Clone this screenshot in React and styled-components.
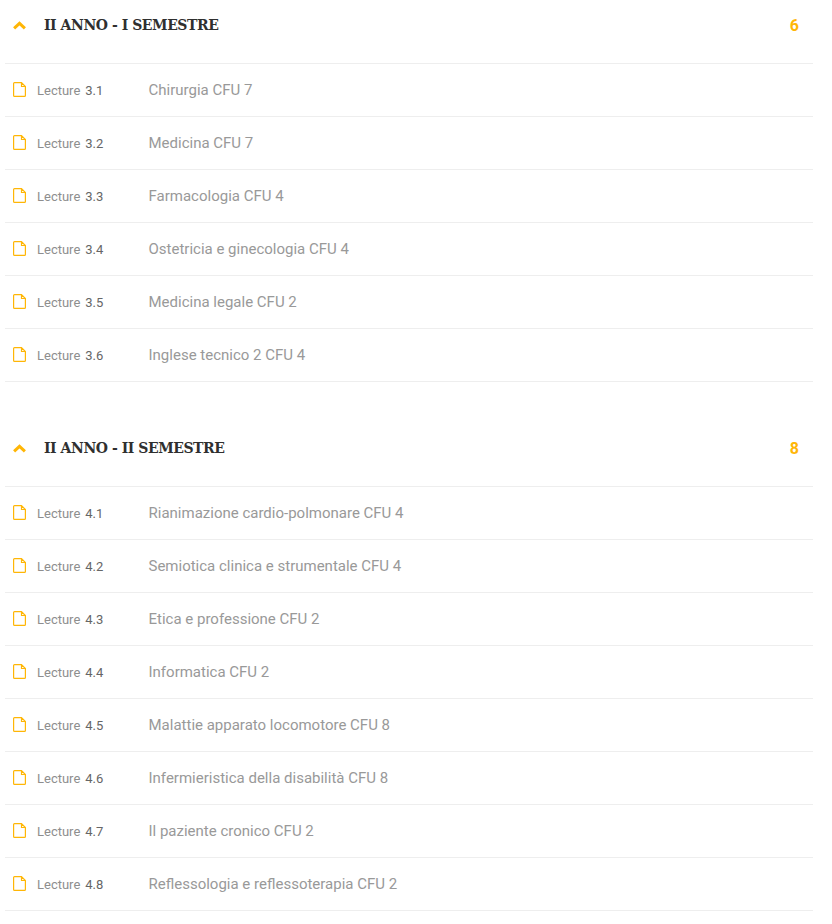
import React from "react"
import styled, { createGlobalStyle } from "styled-components"

const GlobalStyle = createGlobalStyle`
  html, body {
    margin: 0;
    padding: 0;
    background: #fff;
  }
`
const Curriculum = styled.div`
  padding: 0 19px 0 5px;
  font-family: Roboto, sans-serif;
`
const Section = styled.section`
  & + & {
    margin-top: 41px;
  }
`
const SectionHeader = styled.div`
  display: flex;
  align-items: center;
  height: 50px;
  padding: 0 14px 13px 8px;
  border-bottom: 1px solid #eeeeee;
`
const Chevron = styled.svg`
  width: 13px;
  height: 9px;
  margin-right: 18px;
  color: #ffb606;
`
const SectionTitle = styled.h3`
  flex: 1;
  margin: 0;
  color: #2f2f2f;
  font-family: "DejaVu Serif", serif;
  font-size: 14px;
  font-weight: 700;
  letter-spacing: -0.45px;
  line-height: 50px;
`
const SectionCount = styled.span`
  color: #ffb606;
  font-size: 16px;
  font-weight: 700;
`
const LessonRow = styled.div`
  display: flex;
  align-items: center;
  height: 51px;
  padding: 1px 0 0 8px;
  border-bottom: 1px solid #eeeeee;
`
const FileIcon = styled.svg`
  width: 13px;
  height: 15px;
  margin-right: 11px;
  margin-top: -2px;
  color: #ffb606;
`
const LessonLabel = styled.span`
  display: flex;
  gap: 5px;
  width: 111.5px;
  color: #8e8e8e;
  font-size: 13px;
`
const LessonNumber = styled.span`
  color: #666;
`
const LessonName = styled.span`
  margin-top: -2px;
  color: #999;
  font-size: 15px;
`

const sections = [
  {
    title: "II ANNO - I SEMESTRE",
    count: 6,
    lessons: [
      ["3.1", "Chirurgia CFU 7"],
      ["3.2", "Medicina CFU 7"],
      ["3.3", "Farmacologia CFU 4"],
      ["3.4", "Ostetricia e ginecologia CFU 4"],
      ["3.5", "Medicina legale CFU 2"],
      ["3.6", "Inglese tecnico 2 CFU 4"],
    ],
  },
  {
    title: "II ANNO - II SEMESTRE",
    count: 8,
    lessons: [
      ["4.1", "Rianimazione cardio-polmonare CFU 4"],
      ["4.2", "Semiotica clinica e strumentale CFU 4"],
      ["4.3", "Etica e professione CFU 2"],
      ["4.4", "Informatica CFU 2"],
      ["4.5", "Malattie apparato locomotore CFU 8"],
      ["4.6", "Infermieristica della disabilità CFU 8"],
      ["4.7", "Il paziente cronico CFU 2"],
      ["4.8", "Reflessologia e reflessoterapia CFU 2"],
    ],
  },
]

const App = () => (
  <Curriculum>
    <GlobalStyle />
    {sections.map((section) => (
      <Section key={section.title}>
        <SectionHeader>
          <Chevron viewBox="0 0 13 9" fill="none">
            <path d="M1.1 7.3L6.5 2.3L11.9 7.3" stroke="currentColor" strokeWidth="3" />
          </Chevron>
          <SectionTitle>{section.title}</SectionTitle>
          <SectionCount>{section.count}</SectionCount>
        </SectionHeader>
        {section.lessons.map(([number, name]) => (
          <LessonRow key={number}>
            <FileIcon viewBox="0 0 13 15" fill="none">
              <path
                d="M1.5 0.6H8.5L12.4 4.5V13.5C12.4 14 12 14.4 11.5 14.4H1.5C1 14.4 0.6 14 0.6 13.5V1.5C0.6 1 1 0.6 1.5 0.6ZM8.5 0.6V4.5H12.4"
                stroke="currentColor"
                strokeWidth="1.2"
              />
            </FileIcon>
            <LessonLabel>
              Lecture <LessonNumber>{number}</LessonNumber>
            </LessonLabel>
            <LessonName>{name}</LessonName>
          </LessonRow>
        ))}
      </Section>
    ))}
  </Curriculum>
)

export default App
